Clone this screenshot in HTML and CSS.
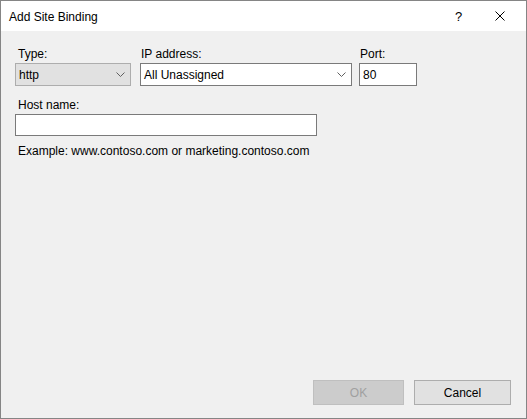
FILE: index.html
```html
<!DOCTYPE html>
<html>
<head>
<meta charset="utf-8">
<link rel="stylesheet" href="styles.css">
</head>
<body>
<div class="window">
  <div class="titlebar">
    <span class="title">Add Site Binding</span>
    <span class="help">?</span>
    <span class="close">
      <svg width="10" height="10" viewBox="0 0 10 10"><path d="M0.5 0.5 L9.5 9.5 M9.5 0.5 L0.5 9.5" stroke="#000" stroke-width="1" fill="none"/></svg>
    </span>
  </div>
  <div class="content">
    <div class="row">
      <div class="field f-type">
        <label class="lbl">Type:</label>
        <div class="combo combo-gray">
          <span class="val">http</span>
          <svg class="chev" width="9" height="5" viewBox="0 0 9 5"><path d="M0.5 0.5 L4.5 4.5 L8.5 0.5" stroke="#606060" stroke-width="1" fill="none"/></svg>
        </div>
      </div>
      <div class="field f-ip">
        <label class="lbl lbl-tight">IP address:</label>
        <div class="combo combo-white">
          <span class="val">All Unassigned</span>
          <svg class="chev" width="9" height="5" viewBox="0 0 9 5"><path d="M0.5 0.5 L4.5 4.5 L8.5 0.5" stroke="#606060" stroke-width="1" fill="none"/></svg>
        </div>
      </div>
      <div class="field f-port">
        <label class="lbl lbl-tight">Port:</label>
        <div class="textbox port-box"><span class="val">80</span></div>
      </div>
    </div>
    <div class="host">
      <label class="lbl">Host name:</label>
      <div class="textbox host-box"></div>
      <div class="example">Example: www.contoso.com or marketing.contoso.com</div>
    </div>
    <div class="spacer"></div>
    <div class="buttons">
      <div class="btn btn-disabled">OK</div>
      <div class="btn btn-cancel">Cancel</div>
    </div>
  </div>
</div>
</body>
</html>
```
FILE: styles.css
```css
* { box-sizing: border-box; }
html, body { margin: 0; padding: 0; }
body {
  font-family: "Liberation Sans", Arial, sans-serif;
  font-size: 12px;
  color: #000;
  background: #fff;
}
.window {
  width: 527px;
  height: 419px;
  border: 1px solid #858585;
  display: flex;
  flex-direction: column;
  background: #f0f0f0;
}
.titlebar {
  height: 30px;
  background: #fff;
  display: flex;
  align-items: center;
  padding-left: 8px;
  flex: none;
}
.title {
  flex: 1;
  font-size: 12px;
  padding-top: 1px;
}
.help {
  width: 10px;
  margin-right: 30px;
  font-size: 13px;
  padding-top: 1px;
}
.close {
  display: flex;
  margin-right: 21px;
}
.content {
  flex: 1;
  display: flex;
  flex-direction: column;
  padding: 16px 14px 13px 14px;
}
.row {
  display: flex;
  gap: 9px;
}
.f-ip { margin-right: -2px; }
.field {
  display: flex;
  flex-direction: column;
}
.lbl {
  display: block;
  height: 15px;
  line-height: 15px;
  padding-left: 3px;
  margin-bottom: 1px;
}
.lbl-tight { padding-left: 1px; }
.combo {
  height: 23px;
  display: flex;
  align-items: center;
  padding: 0 4px 0 3px;
}
.combo .val { flex: 1; }
.combo-gray {
  width: 116px;
  background: #e1e1e1;
  border: 1px solid #adadad;
}
.combo-white {
  width: 212px;
  background: #fff;
  border: 1px solid #7a7a7a;
}
.chev { margin-right: 1px; }
.textbox {
  background: #fff;
  border: 1px solid #7a7a7a;
  display: flex;
  align-items: center;
  padding-left: 3px;
}
.port-box {
  width: 58px;
  height: 23px;
}
.host {
  margin-top: 12px;
  display: flex;
  flex-direction: column;
}
.host-box {
  width: 302px;
  height: 22px;
}
.example {
  margin-top: 8px;
  padding-left: 3px;
  line-height: 15px;
}
.spacer { flex: 1; }
.buttons {
  display: flex;
  justify-content: flex-end;
  gap: 10px;
  padding-right: 1px;
}
.btn {
  height: 25px;
  display: flex;
  align-items: center;
  justify-content: center;
}
.btn-disabled {
  width: 91px;
  background: #cccccc;
  border: 1px solid #bfbfbf;
  color: #a0a0a0;
}
.btn-cancel {
  width: 97px;
  background: #e1e1e1;
  border: 1px solid #adadad;
}
```
